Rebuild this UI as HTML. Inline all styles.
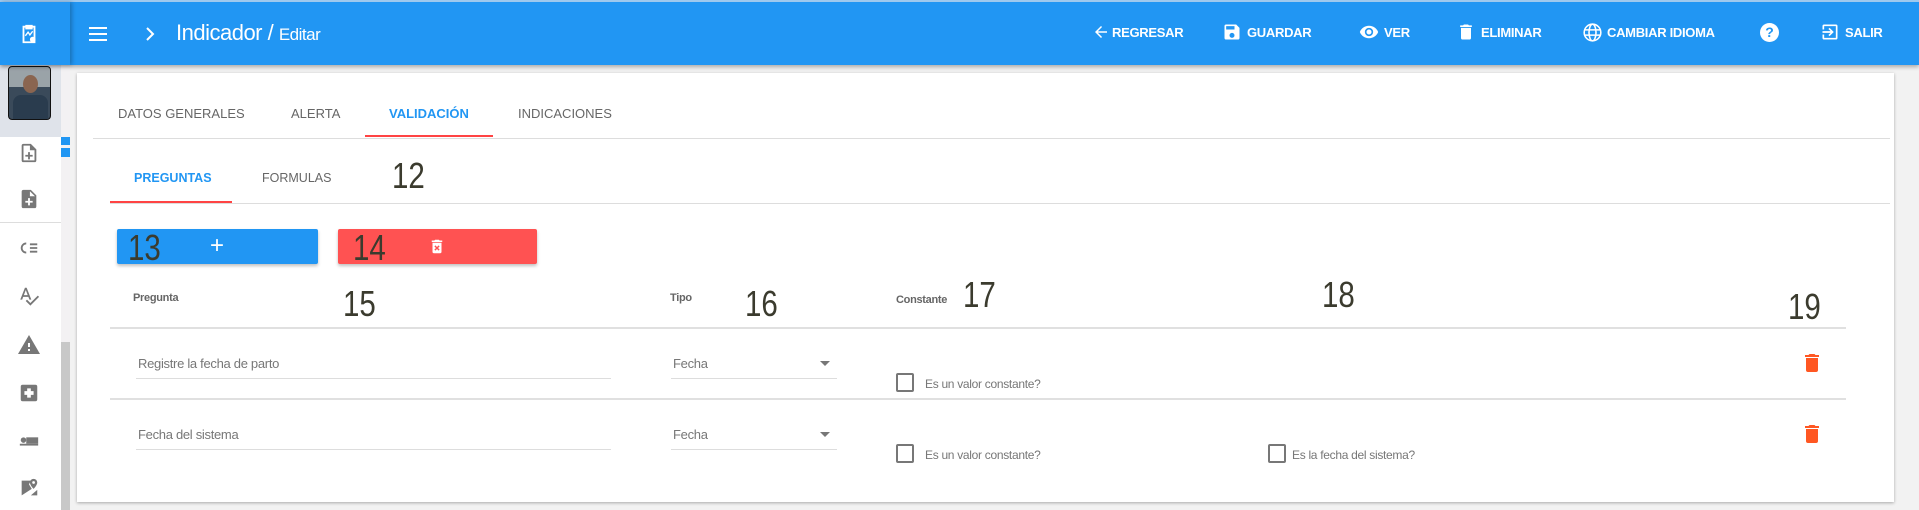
<!DOCTYPE html>
<html><head><meta charset="utf-8"><style>
*{margin:0;padding:0;box-sizing:border-box}
body{width:1919px;height:510px;overflow:hidden;background:#f2f2f2;font-family:"Liberation Sans",sans-serif;position:relative}
.a{position:absolute}
.hdr{left:0;top:0;width:1919px;height:65px;background:#2196f3;border-top:2px solid #9ec9ee;box-shadow:0 2px 4px rgba(0,0,0,.3)}
.ht{color:#fff;font-weight:bold;font-size:13px;top:25px;letter-spacing:-.3px}
.hi{position:absolute;top:22px}
.side{left:0;top:65px;width:61px;height:445px;background:#fff}
.sb{left:61px;top:65px;width:9px;height:445px;background:#f3f1f3}
.card{left:77px;top:73px;width:1817px;height:429px;background:#fff;box-shadow:0 1px 3px rgba(0,0,0,.3)}
.tab{font-size:13px;color:#666;top:106px}
.num{color:#3b3b2e;font-size:36px;font-family:"Liberation Sans",sans-serif;font-weight:normal;transform:scaleX(.82);transform-origin:left}
.lbl{font-size:11px;color:#666;font-weight:bold;letter-spacing:-.3px}
.txt{font-size:13px;color:#777;letter-spacing:-.3px}
.line{height:1px;background:#ddd}
.cb{width:18px;height:19px;border:2px solid #777;border-radius:2px}
.ic{fill:#777}
</style></head><body>
<div class="a side"></div>
<div class="a sb"></div>
<div class="a" style="left:61px;top:342px;width:9px;height:168px;background:#c8c8c8"></div>
<div class="a" style="left:61px;top:137px;width:9px;height:8px;background:#2196f3"></div>
<div class="a" style="left:61px;top:148px;width:9px;height:9px;background:#2196f3"></div>
<div class="a" style="left:0;top:65px;width:61px;height:72px;background:#dfe3ea"></div>
<div class="a" style="left:8px;top:66px;width:43px;height:54px;background:#3a4a5a;border-radius:4px;border:1px solid #111;overflow:hidden"><div style="position:absolute;left:0;top:0;width:43px;height:20px;background:#9aa3a8"></div><div style="position:absolute;left:14px;top:8px;width:15px;height:18px;border-radius:50%;background:#8a6550"></div><div style="position:absolute;left:4px;top:28px;width:35px;height:26px;border-radius:8px 8px 0 0;background:#2a3c4e"></div></div>
<svg class="a" style="left:18px;top:142px" width="22" height="22" viewBox="0 0 24 24"><path class="ic" d="M14 2H6a2 2 0 0 0-2 2v16a2 2 0 0 0 2 2h12a2 2 0 0 0 2-2V8zm4 18H6V4h7v5h5zM11 11v3H8v2h3v3h2v-3h3v-2h-3v-3z"/></svg>
<svg class="a" style="left:18px;top:188px" width="22" height="22" viewBox="0 0 24 24"><path class="ic" d="M14 2H6a2 2 0 0 0-2 2v16a2 2 0 0 0 2 2h12a2 2 0 0 0 2-2V8zm2 14h-3v3h-2v-3H8v-2h3v-3h2v3h3zm-3-7V3.5L18.5 9z"/></svg>
<div class="a" style="left:0;top:222px;width:61px;height:1px;background:#ddd"></div>
<svg class="a" style="left:18px;top:237px" width="22" height="22" viewBox="0 0 24 24"><path class="ic" d="M13 7h8v2h-8zm0 4h8v2h-8zm0 4h8v2h-8zM9 6a6 6 0 1 0 0 12v-2a4 4 0 1 1 0-8z"/></svg>
<svg class="a" style="left:18px;top:285px" width="22" height="22" viewBox="0 0 24 24"><path class="ic" d="M12.45 16h2.09L9.43 3H7.57L2.46 16h2.09l1.12-3h5.64zm-6.02-5L8.5 5.48 10.57 11zm15.16.59l-8.09 8.09L9.83 16l-1.41 1.41 5.09 5.09L23 13z"/></svg>
<svg class="a" style="left:17px;top:333px" width="24" height="24" viewBox="0 0 24 24"><path class="ic" d="M1 21h22L12 2zm12-3h-2v-2h2zm0-4h-2v-4h2z"/></svg>
<svg class="a" style="left:18px;top:382px" width="22" height="22" viewBox="0 0 24 24"><path class="ic" d="M19 3H5a2 2 0 0 0-2 2v14a2 2 0 0 0 2 2h14a2 2 0 0 0 2-2V5a2 2 0 0 0-2-2zm-2 11h-3v3h-4v-3H7v-4h3V7h4v3h3z"/></svg>
<svg class="a" style="left:17px;top:430px" width="24" height="22" viewBox="0 0 24 24"><circle class="ic" cx="6" cy="11" r="3"/><rect class="ic" x="9" y="8" width="13" height="7"/><rect class="ic" x="2" y="15" width="20" height="2"/></svg>
<svg class="a" style="left:18px;top:477px" width="22" height="22" viewBox="0 0 24 24"><path class="ic" d="M4 4h10l-2 4 3 5-11 7zm10 16l7-6v6zM17 2a4 4 0 0 1 4 4c0 3-4 7-4 7s-4-4-4-7a4 4 0 0 1 4-4zm0 2.5a1.5 1.5 0 1 0 0 3 1.5 1.5 0 0 0 0-3z"/></svg>

<div class="a hdr"></div>
<div class="a" style="left:0;top:2px;width:70px;height:63px;background:#2196f3;box-shadow:2px 0 4px rgba(0,0,0,.25)"></div>
<svg class="a" style="left:18px;top:22px" width="22" height="24" viewBox="0 0 24 24"><path fill="none" stroke="#fff" stroke-width="2" d="M6 4h12v17H6zM9 3h6v3H9z"/><path fill="none" stroke="#fff" stroke-width="1.5" d="M8 14l3-4 2 3 3-4"/><circle cx="16" cy="18" r="3" fill="#fff"/></svg>
<div class="a" style="left:89px;top:27px;width:18px;height:2px;background:#fff;box-shadow:0 6px 0 #fff,0 12px 0 #fff"></div>
<svg class="a" style="left:145px;top:27px" width="10" height="14" viewBox="0 0 10 14"><path d="M2 1l6 6-6 6" fill="none" stroke="#fff" stroke-width="2"/></svg>
<div class="a" style="left:176px;top:20px;color:#fff;font-size:22px;letter-spacing:-.5px">Indicador / <span style="font-size:17px">Editar</span></div>

<svg class="hi" style="left:1092px" width="18" height="20" viewBox="0 0 24 24"><path d="M20 11H7.8l5.6-5.6L12 4l-8 8 8 8 1.4-1.4L7.8 13H20z" fill="#fff"/></svg>
<div class="a ht" style="left:1112px">REGRESAR</div>
<svg class="hi" style="left:1222px" width="20" height="20" viewBox="0 0 24 24"><path d="M17 3H5a2 2 0 0 0-2 2v14a2 2 0 0 0 2 2h14a2 2 0 0 0 2-2V7zm-5 16a3 3 0 1 1 0-6 3 3 0 0 1 0 6zm3-10H5V5h10z" fill="#fff"/></svg>
<div class="a ht" style="left:1247px">GUARDAR</div>
<svg class="hi" style="left:1358px" width="22" height="20" viewBox="0 0 24 24"><path d="M12 4.5C7 4.5 2.7 7.6 1 12c1.7 4.4 6 7.5 11 7.5s9.3-3.1 11-7.5c-1.7-4.4-6-7.5-11-7.5zM12 17a5 5 0 1 1 0-10 5 5 0 0 1 0 10zm0-8a3 3 0 1 0 0 6 3 3 0 0 0 0-6z" fill="#fff"/></svg>
<div class="a ht" style="left:1384px">VER</div>
<svg class="hi" style="left:1456px" width="20" height="20" viewBox="0 0 24 24"><path d="M6 19a2 2 0 0 0 2 2h8a2 2 0 0 0 2-2V7H6zM19 4h-3.5l-1-1h-5l-1 1H5v2h14z" fill="#fff"/></svg>
<div class="a ht" style="left:1481px">ELIMINAR</div>
<svg class="hi" style="left:1582px" width="21" height="21" viewBox="0 0 24 24"><g fill="none" stroke="#fff" stroke-width="1.8"><circle cx="12" cy="12" r="9.5"/><ellipse cx="12" cy="12" rx="4" ry="9.5"/><path d="M3 9h18M3 15h18"/></g></svg>
<div class="a ht" style="left:1607px">CAMBIAR IDIOMA</div>
<div class="a" style="left:1760px;top:23px;width:19px;height:19px;border-radius:50%;background:#fff;color:#2196f3;font-weight:bold;font-size:14px;text-align:center;line-height:19px">?</div>
<svg class="hi" style="left:1820px" width="20" height="20" viewBox="0 0 24 24"><path d="M10.1 15.6l1.4 1.4 5-5-5-5-1.4 1.4 2.6 2.6H3v2h9.7zM19 3H5a2 2 0 0 0-2 2v4h2V5h14v14H5v-4H3v4a2 2 0 0 0 2 2h14a2 2 0 0 0 2-2V5a2 2 0 0 0-2-2z" fill="#fff"/></svg>
<div class="a ht" style="left:1845px">SALIR</div>

<div class="a card"></div>
<div class="a tab" style="left:118px">DATOS GENERALES</div>
<div class="a tab" style="left:291px">ALERTA</div>
<div class="a tab" style="left:389px;color:#2196f3;font-weight:bold">VALIDACIÓN</div>
<div class="a tab" style="left:518px">INDICACIONES</div>
<div class="a" style="left:365px;top:135px;width:128px;height:2px;background:#f44"></div>
<div class="a line" style="left:93px;top:138px;width:1797px"></div>
<div class="a tab" style="left:134px;top:171px;color:#2196f3;font-weight:bold;font-size:12.5px">PREGUNTAS</div>
<div class="a tab" style="left:262px;top:171px;font-size:12.5px">FORMULAS</div>
<div class="a" style="left:110px;top:201px;width:122px;height:2px;background:#f44"></div>
<div class="a line" style="left:110px;top:203px;width:1780px"></div>
<div class="a num" style="left:392px;top:155px">12</div>

<div class="a" style="left:117px;top:229px;width:201px;height:35px;background:#2196f3;border-radius:2px;box-shadow:0 2px 3px rgba(0,0,0,.25)"></div>
<div class="a" style="left:338px;top:229px;width:199px;height:35px;background:#ff5252;border-radius:2px;box-shadow:0 2px 3px rgba(0,0,0,.25)"></div>
<div class="a num" style="left:128px;top:227px">13</div>
<div class="a" style="left:210px;top:232px;color:#fff;font-size:24px">+</div>
<div class="a num" style="left:353px;top:227px">14</div>
<svg class="a" style="left:428px;top:237px" width="18" height="19" viewBox="0 0 24 24"><path d="M6 19a2 2 0 0 0 2 2h8a2 2 0 0 0 2-2V7H6zm2.5-7.1l1.4-1.4 2.1 2.1 2.1-2.1 1.4 1.4-2.1 2.1 2.1 2.1-1.4 1.4-2.1-2.1-2.1 2.1-1.4-1.4 2.1-2.1zM15.5 4l-1-1h-5l-1 1H5v2h14V4z" fill="#fff"/></svg>

<div class="a lbl" style="left:133px;top:292px">Pregunta</div>
<div class="a num" style="left:343px;top:283px">15</div>
<div class="a lbl" style="left:670px;top:292px">Tipo</div>
<div class="a num" style="left:745px;top:283px">16</div>
<div class="a lbl" style="left:896px;top:294px">Constante</div>
<div class="a num" style="left:963px;top:274px">17</div>
<div class="a num" style="left:1322px;top:274px">18</div>
<div class="a num" style="left:1788px;top:286px">19</div>
<div class="a line" style="left:110px;top:327px;width:1736px;height:2px;background:#e0e0e0"></div>

<div class="a txt" style="left:138px;top:356px">Registre la fecha de parto</div>
<div class="a line" style="left:136px;top:378px;width:475px"></div>
<div class="a txt" style="left:673px;top:356px">Fecha</div>
<div class="a" style="left:820px;top:361px;border:5px solid transparent;border-top:5px solid #777;border-bottom:none"></div>
<div class="a line" style="left:671px;top:378px;width:166px"></div>
<div class="a cb" style="left:896px;top:373px"></div>
<div class="a txt" style="left:925px;top:377px;font-size:12px">Es un valor constante?</div>
<svg class="a" style="left:1800px;top:351px" width="24" height="24" viewBox="0 0 24 24"><path d="M6 19a2 2 0 0 0 2 2h8a2 2 0 0 0 2-2V7H6zM19 4h-3.5l-1-1h-5l-1 1H5v2h14z" fill="#ff5722"/></svg>
<div class="a line" style="left:110px;top:398px;width:1736px;height:2px;background:#e0e0e0"></div>

<div class="a txt" style="left:138px;top:427px">Fecha del sistema</div>
<div class="a line" style="left:136px;top:449px;width:475px"></div>
<div class="a txt" style="left:673px;top:427px">Fecha</div>
<div class="a" style="left:820px;top:432px;border:5px solid transparent;border-top:5px solid #777;border-bottom:none"></div>
<div class="a line" style="left:671px;top:449px;width:166px"></div>
<div class="a cb" style="left:896px;top:444px"></div>
<div class="a txt" style="left:925px;top:448px;font-size:12px">Es un valor constante?</div>
<div class="a cb" style="left:1268px;top:444px"></div>
<div class="a txt" style="left:1292px;top:448px;font-size:12px">Es la fecha del sistema?</div>
<svg class="a" style="left:1800px;top:422px" width="24" height="24" viewBox="0 0 24 24"><path d="M6 19a2 2 0 0 0 2 2h8a2 2 0 0 0 2-2V7H6zM19 4h-3.5l-1-1h-5l-1 1H5v2h14z" fill="#ff5722"/></svg>
</body></html>
